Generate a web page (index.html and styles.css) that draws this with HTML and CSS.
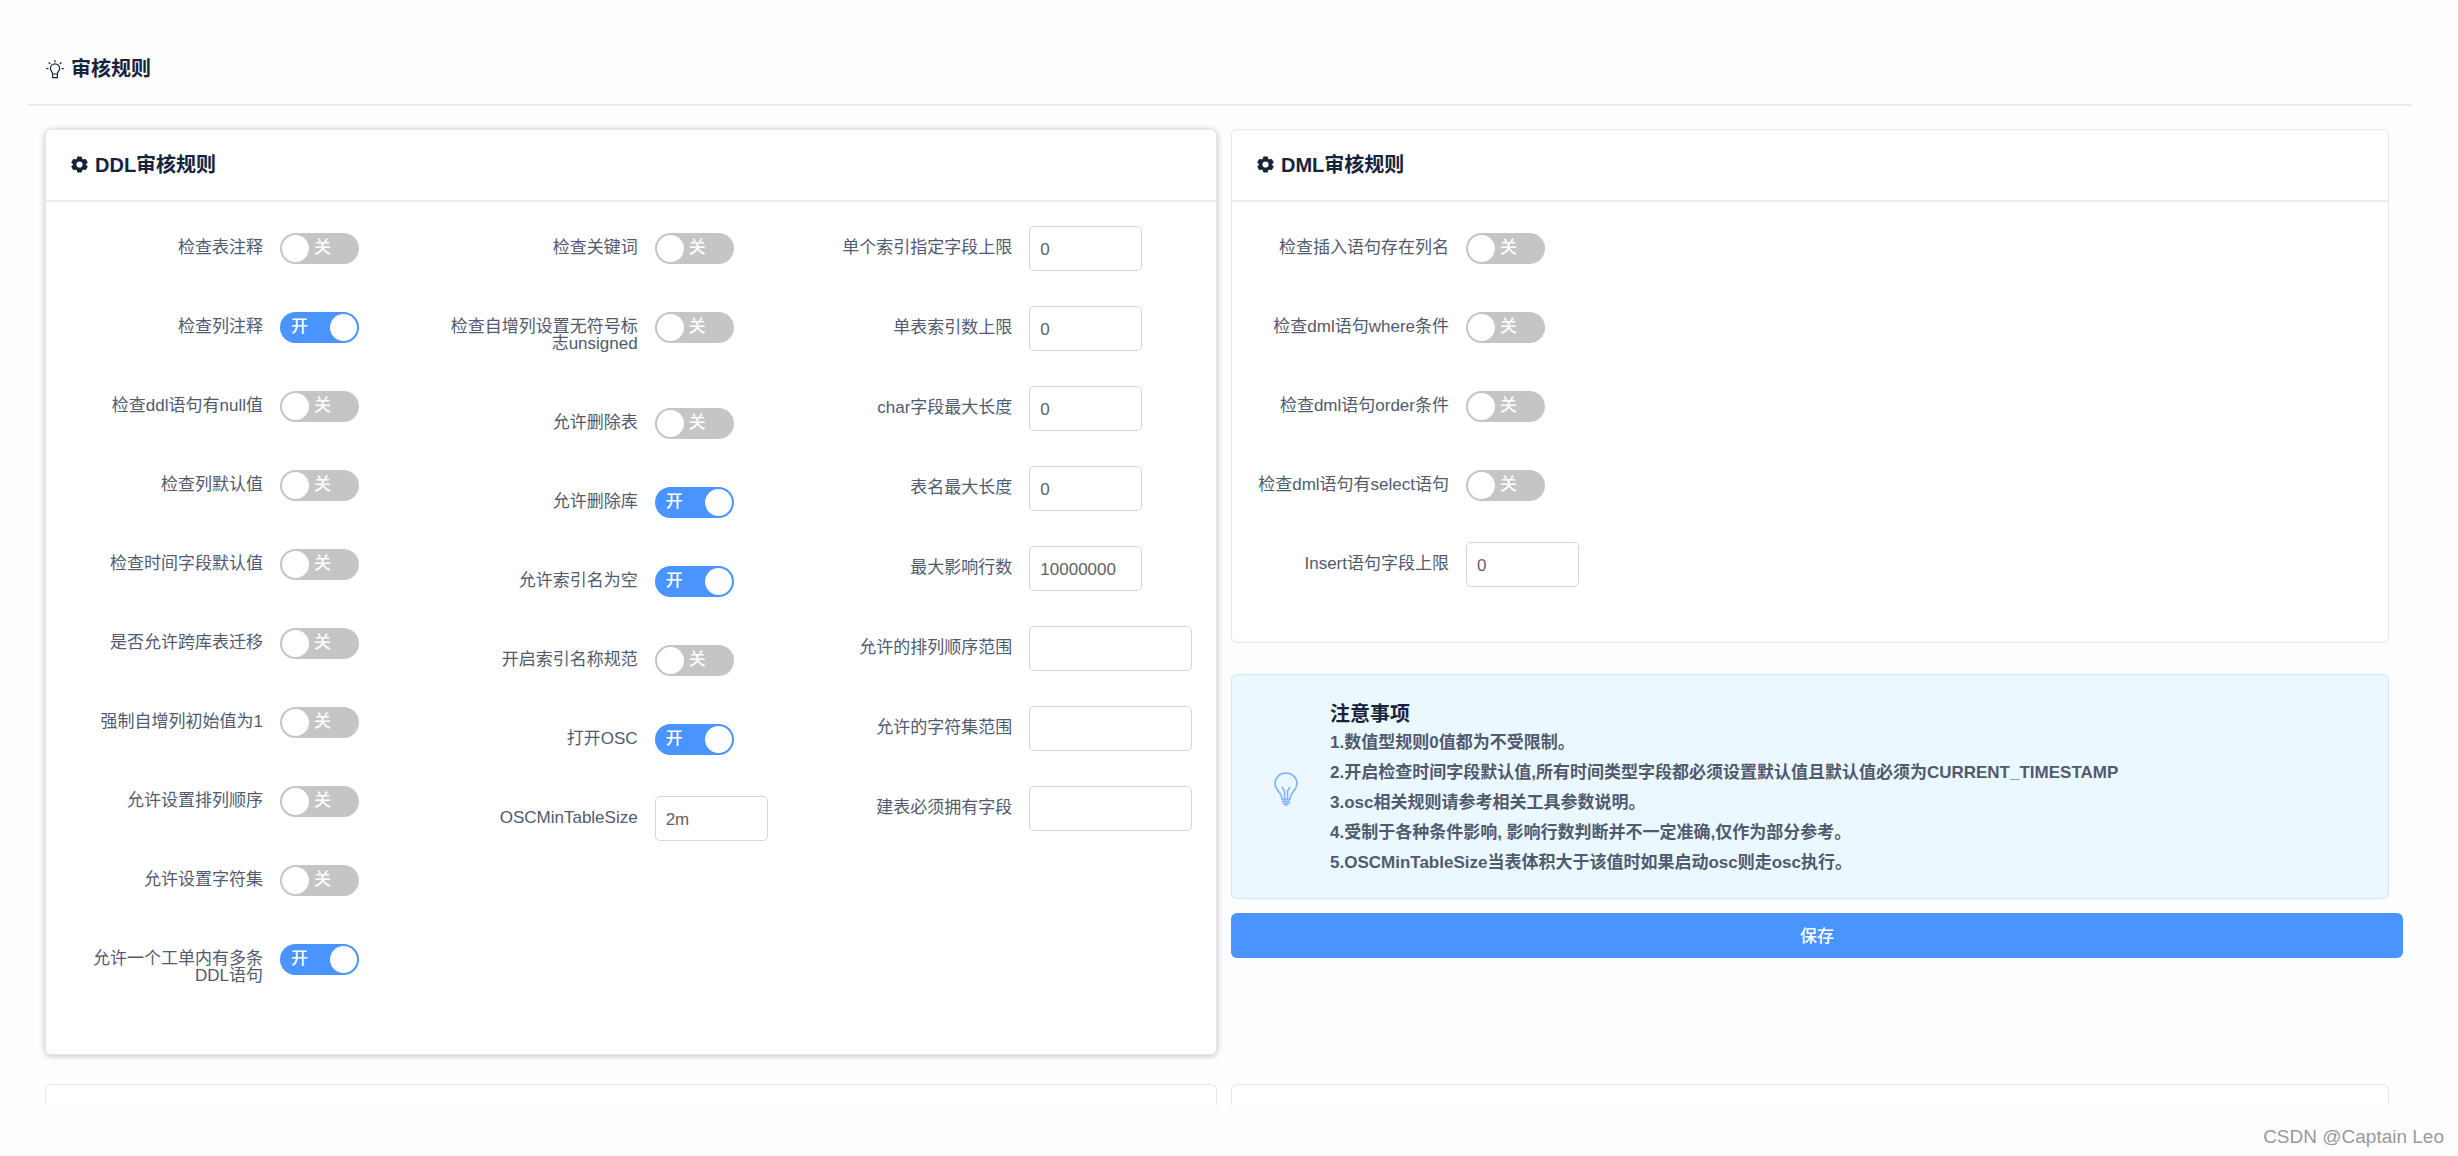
FILE: index.html
```html
<!DOCTYPE html>
<html lang="zh-CN">
<head>
<meta charset="utf-8">
<title>审核规则</title>
<link rel="stylesheet" href="styles.css">
</head>
<body>
<header class="page-header">
  <svg class="icon-bulb" viewBox="0 0 18 20" aria-hidden="true"><path d="M6.600 15c0-2.200-2.200-3-2.200-5.600a4.600 4.600 0 0 1 9.200 0c0 2.600-2.200 3.400-2.200 5.600zM6.600 15v3.600h4.800V15M9 1v2.200M2.600 3.400l1.600 1.600M15.400 3.400L13.800 5M.2 9.600h2.200M15.600 9.600h2.200"/></svg>
  <h1 class="title">审核规则</h1>
</header>
<main class="page">
  <section class="card card-raised">
    <div class="card-head">
      <svg class="icon-gear" viewBox="0 0 16 16" aria-hidden="true"><path fill-rule="evenodd" stroke-linejoin="round" d="M6.400 1h3.200l.6 2 1.300.8 2.100-.5 1.600 2.700L13.700 7.400v1.200l1.500 1.400-1.600 2.700-2.100-.5-1.300.8-.6 2H6.400l-.6-2-1.300-.8-2.100.5L.8 10l1.500-1.400V7.400L.8 6l1.600-2.700 2.100.5L5.800 3zM8 4.600a3.400 3.400 0 1 0 0 6.800 3.400 3.400 0 0 0 0-6.800z"/></svg>
      <h2 class="title">DDL审核规则</h2>
    </div>
    <form class="card-body columns">
      <div class="column">
        <div class="item"><label class="label" for="a1">检查表注释</label><span class="switch"><input type="checkbox" role="switch" id="a1"></span></div>
        <div class="item"><label class="label" for="a2">检查列注释</label><span class="switch"><input type="checkbox" role="switch" id="a2" checked></span></div>
        <div class="item"><label class="label" for="a3">检查ddl语句有null值</label><span class="switch"><input type="checkbox" role="switch" id="a3"></span></div>
        <div class="item"><label class="label" for="a4">检查列默认值</label><span class="switch"><input type="checkbox" role="switch" id="a4"></span></div>
        <div class="item"><label class="label" for="a5">检查时间字段默认值</label><span class="switch"><input type="checkbox" role="switch" id="a5"></span></div>
        <div class="item"><label class="label" for="a6">是否允许跨库表迁移</label><span class="switch"><input type="checkbox" role="switch" id="a6"></span></div>
        <div class="item"><label class="label" for="a7">强制自增列初始值为1</label><span class="switch"><input type="checkbox" role="switch" id="a7"></span></div>
        <div class="item"><label class="label" for="a8">允许设置排列顺序</label><span class="switch"><input type="checkbox" role="switch" id="a8"></span></div>
        <div class="item"><label class="label" for="a9">允许设置字符集</label><span class="switch"><input type="checkbox" role="switch" id="a9"></span></div>
        <div class="item"><label class="label" for="a10">允许一个工单内有多条DDL语句</label><span class="switch"><input type="checkbox" role="switch" id="a10" checked></span></div>
      </div>
      <div class="column">
        <div class="item"><label class="label" for="b1">检查关键词</label><span class="switch"><input type="checkbox" role="switch" id="b1"></span></div>
        <div class="item"><label class="label" for="b2">检查自增列设置无符号标志unsigned</label><span class="switch"><input type="checkbox" role="switch" id="b2"></span></div>
        <div class="item"><label class="label" for="b3">允许删除表</label><span class="switch"><input type="checkbox" role="switch" id="b3"></span></div>
        <div class="item"><label class="label" for="b4">允许删除库</label><span class="switch"><input type="checkbox" role="switch" id="b4" checked></span></div>
        <div class="item"><label class="label" for="b5">允许索引名为空</label><span class="switch"><input type="checkbox" role="switch" id="b5" checked></span></div>
        <div class="item"><label class="label" for="b6">开启索引名称规范</label><span class="switch"><input type="checkbox" role="switch" id="b6"></span></div>
        <div class="item"><label class="label" for="b7">打开OSC</label><span class="switch"><input type="checkbox" role="switch" id="b7" checked></span></div>
        <div class="item"><label class="label" for="b8">OSCMinTableSize</label><input class="field" type="text" id="b8" value="2m"></div>
      </div>
      <div class="column column-fields">
        <div class="item"><label class="label" for="c1">单个索引指定字段上限</label><input class="field" type="text" id="c1" value="0"></div>
        <div class="item"><label class="label" for="c2">单表索引数上限</label><input class="field" type="text" id="c2" value="0"></div>
        <div class="item"><label class="label" for="c3">char字段最大长度</label><input class="field" type="text" id="c3" value="0"></div>
        <div class="item"><label class="label" for="c4">表名最大长度</label><input class="field" type="text" id="c4" value="0"></div>
        <div class="item"><label class="label" for="c5">最大影响行数</label><input class="field" type="text" id="c5" value="10000000"></div>
        <div class="item"><label class="label" for="c6">允许的排列顺序范围</label><input class="field field-wide" type="text" id="c6"></div>
        <div class="item"><label class="label" for="c7">允许的字符集范围</label><input class="field field-wide" type="text" id="c7"></div>
        <div class="item"><label class="label" for="c8">建表必须拥有字段</label><input class="field field-wide" type="text" id="c8"></div>
      </div>
    </form>
  </section>

  <div class="side">
    <section class="card inset">
      <div class="card-head">
        <svg class="icon-gear" viewBox="0 0 16 16" aria-hidden="true"><path fill-rule="evenodd" stroke-linejoin="round" d="M6.400 1h3.200l.6 2 1.300.8 2.100-.5 1.600 2.700L13.700 7.400v1.200l1.500 1.400-1.600 2.700-2.100-.5-1.300.8-.6 2H6.400l-.6-2-1.300-.8-2.100.5L.8 10l1.500-1.400V7.400L.8 6l1.600-2.700 2.100.5L5.800 3zM8 4.600a3.400 3.400 0 1 0 0 6.800 3.400 3.400 0 0 0 0-6.800z"/></svg>
        <h2 class="title">DML审核规则</h2>
      </div>
      <form class="card-body">
        <div class="item"><label class="label" for="d1">检查插入语句存在列名</label><span class="switch"><input type="checkbox" role="switch" id="d1"></span></div>
        <div class="item"><label class="label" for="d2">检查dml语句where条件</label><span class="switch"><input type="checkbox" role="switch" id="d2"></span></div>
        <div class="item"><label class="label" for="d3">检查dml语句order条件</label><span class="switch"><input type="checkbox" role="switch" id="d3"></span></div>
        <div class="item"><label class="label" for="d4">检查dml语句有select语句</label><span class="switch"><input type="checkbox" role="switch" id="d4"></span></div>
        <div class="item"><label class="label" for="d5">Insert语句字段上限</label><input class="field" type="text" id="d5" value="0"></div>
      </form>
    </section>
    <section class="notice inset">
      <svg class="icon-tip" viewBox="0 0 24 34" aria-hidden="true"><path d="M8 27.500C8 20 1 18.500 1 11.500a11 10.500 0 0 1 22 0C23 18.500 16 20 16 27.500zM10.500 27V19l-2.500-4M13.500 27V19l2.500-4M8 29.500h8M8.500 31.500h7M10.500 33h3"/></svg>
      <div>
        <h2 class="title">注意事项</h2>
        <p class="notice-line">1.数值型规则0值都为不受限制。</p>
        <p class="notice-line">2.开启检查时间字段默认值,所有时间类型字段都必须设置默认值且默认值必须为CURRENT_TIMESTAMP</p>
        <p class="notice-line">3.osc相关规则请参考相关工具参数说明。</p>
        <p class="notice-line">4.受制于各种条件影响, 影响行数判断并不一定准确,仅作为部分参考。</p>
        <p class="notice-line">5.OSCMinTableSize当表体积大于该值时如果启动osc则走osc执行。</p>
      </div>
    </section>
    <button class="save" type="button">保存</button>
  </div>

  <div class="card card-cut"></div>
  <div class="card card-cut inset"></div>
</main>
<footer class="credit">CSDN @Captain Leo</footer>
</body>
</html>
```
FILE: styles.css
```css
* { box-sizing: border-box; }

body {
  margin: 0;
  background: #fefefe;
  color: #515a6e;
  font-family: "Liberation Sans", "Noto Sans CJK SC", sans-serif;
  font-size: 17px;
}

.title {
  margin: 0;
  color: #17233d;
  font-size: 20px;
  font-weight: 700;
  line-height: 28px;
}

.page-header {
  display: flex;
  align-items: center;
  gap: 7px;
  margin: 0 46px 0 27px;
  padding: 55px 19px 21px;
  border-bottom: 2px solid #e8eaec;
}

.icon-bulb {
  width: 18px;
  height: 20px;
  fill: none;
  stroke: #17233d;
  stroke-width: 1.2;
}

.page {
  display: grid;
  grid-template-columns: 1fr 1fr;
  gap: 29px 14px;
  padding: 23px 55px 0 45px;
}

.card {
  border: 1px solid #e4e6e9;
  border-radius: 6px;
  background: #fff;
}

.card-raised { box-shadow: 0 1px 6px rgba(0, 0, 0, 0.25); }

.inset { margin-right: 14px; }

.card-head {
  display: flex;
  align-items: center;
  gap: 7px;
  height: 72px;
  padding: 0 25px 1px;
  border-bottom: 2px solid #e8eaec;
}

.icon-gear {
  width: 17px;
  height: 17px;
  fill: #17233d;
  stroke: #17233d;
  stroke-width: 1;
}

.card-body { padding: 24px 22px 21px 24px; }

.columns {
  display: grid;
  grid-template-columns: repeat(3, 1fr);
}

.item {
  display: flex;
  align-items: flex-start;
  min-height: 45px;
  margin-bottom: 34px;
}

.column-fields .item { min-height: 46px; }

.label {
  flex: 0 0 210px;
  padding: 13px 17px 15px 0;
  line-height: 17px;
  text-align: right;
  overflow-wrap: anywhere;
}

.switch {
  position: relative;
  width: 79px;
  height: 31px;
  margin-top: 7px;
}

.switch input {
  display: block;
  width: 79px;
  height: 31px;
  margin: 0;
  border-radius: 16px;
  background: #c5c5c5;
  appearance: none;
  cursor: pointer;
}

.switch input:checked { background: #4a94ff; }

.switch::before {
  content: "关";
  position: absolute;
  left: 34px;
  color: #fff;
  font-size: 17px;
  font-weight: 500;
  line-height: 30px;
  pointer-events: none;
}

.switch:has(input:checked)::before {
  content: "开";
  left: 11px;
}

.switch::after {
  content: "";
  position: absolute;
  top: 2px;
  left: 2px;
  width: 27px;
  height: 27px;
  border-radius: 50%;
  background: #fff;
  pointer-events: none;
}

.switch:has(input:checked)::after { left: 50px; }

.field {
  width: 113px;
  height: 45px;
  padding: 2px 10px 0;
  border: 1px solid #d3d6dd;
  border-radius: 5px;
  background: #fff;
  color: #606266;
  font: inherit;
}

.field-wide { width: 163px; }

.side {
  display: flex;
  flex-direction: column;
}

.notice {
  display: flex;
  align-items: center;
  gap: 32px;
  margin-top: 31px;
  padding: 25px 42px 20px;
  border: 1px solid #cfe6f8;
  border-radius: 6px;
  background: #ecf8ff;
}

.icon-tip {
  flex: none;
  width: 24px;
  height: 34px;
  fill: none;
  stroke: #7db4fb;
  stroke-width: 1.6;
}

.notice-line {
  margin: 0;
  font-weight: 700;
  line-height: 30px;
}

.save {
  height: 45px;
  margin-top: 14px;
  padding: 0 0 2px;
  border: 0;
  border-radius: 6px;
  background: #4a94ff;
  color: #fff;
  font: inherit;
  font-weight: 500;
}

.card-cut {
  height: 21px;
  border-bottom: 0;
  border-radius: 6px 6px 0 0;
}

.credit {
  padding: 20px 14px 8px;
  color: #999;
  font-size: 19px;
  line-height: 23px;
  text-align: right;
}
```
